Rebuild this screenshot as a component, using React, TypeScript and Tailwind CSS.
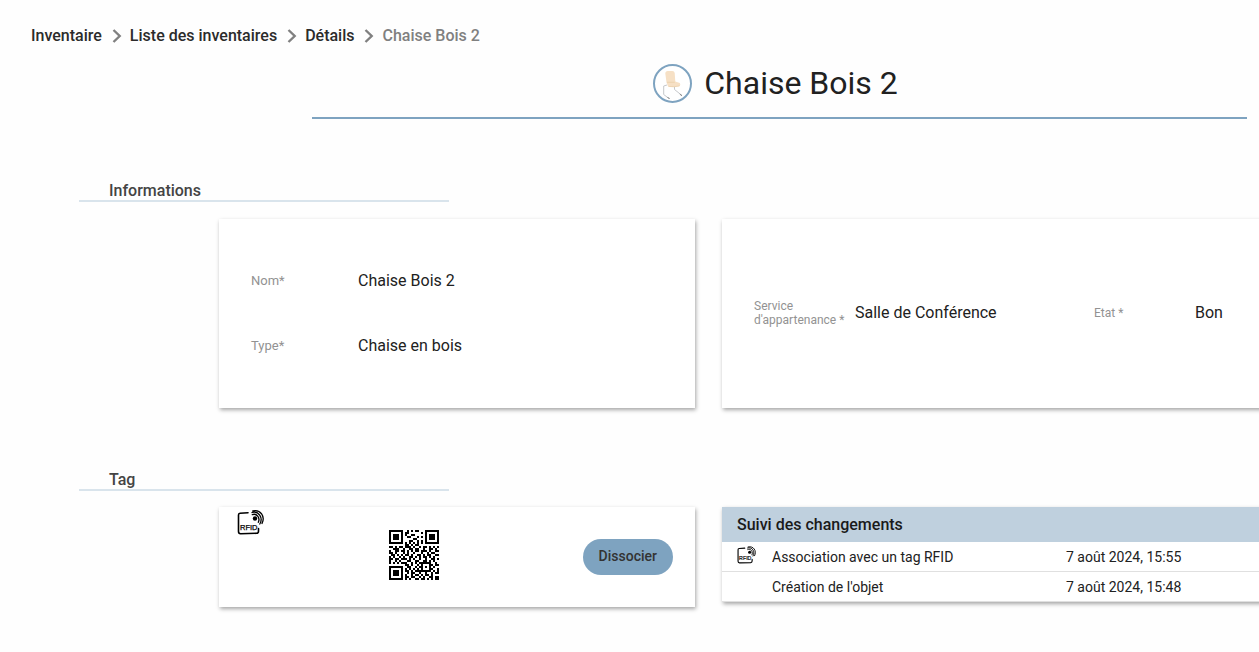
import { Fragment } from "react";

interface Change {
  label: string;
  date: string;
  rfid: boolean;
}

const PARENTS = ["Inventaire", "Liste des inventaires", "Détails"];

const CHANGES: Change[] = [
  { label: "Association avec un tag RFID", date: "7 août 2024, 15:55", rfid: true },
  { label: "Création de l'objet", date: "7 août 2024, 15:48", rfid: false },
];

// One string per row, "#" is a dark module
const QR_ROWS = [
  "#######..#.#.##...#######",
  "#.....#.##......#.#.....#",
  "#.###.#.#..##.....#.###.#",
  "#.###.#..##...#.#.#.###.#",
  "#.###.#.....##....#.###.#",
  "#.....#...##..#.#.#.....#",
  "#######.#.#.#.#.#.#######",
  "........##.#.##..........",
  "##.#.##.###.#..#.##.#.#.#",
  "..###..#..##.##..#..##.#.",
  "#..##.##.#.#.##.###.#..##",
  "##.#...#.#..#...#..#.##..",
  ".##.#.#.##.#..##.#.##..##",
  "#.#..#.#..##.#.#.##.#.#..",
  "##.##.###.#.#..#..#..##.#",
  "#..#.#...##..##..##.#.#..",
  "#.#.#.###..#.#.######..#.",
  "........##.#..#.#...##.##",
  "#######..##..#.##.#.#.#..",
  "#.....#.#.#.#.#.#...##..#",
  "#.###.#.##.#.########.#.#",
  "#.###.#..#.##..#..#..#.##",
  "#.###.#.#..#.##.#.##.#...",
  "#.....#.##.##..#.#..##.##",
  "#######.#.#..##.##.#.#.##",
];

function Chevron() {
  return (
    <svg viewBox="0 0 10 14" className="h-[14px] w-[10px]" fill="none" stroke="#808080" strokeWidth="2.4" aria-hidden="true">
      <path d="M1.500 1 7.700 7 1.500 13" />
    </svg>
  );
}

function RfidIcon({ className }: { className: string }) {
  return (
    <svg viewBox="0 0 27 25" className={className} fill="none" stroke="#000" strokeLinecap="round" aria-hidden="true">
      <path strokeWidth="1.6" d="M11 2.800 3 3.200Q1.500 3.300 1.500 5V21.500Q1.500 23.700 3.500 23.700L19.500 23.300Q21.500 23.200 21.500 21.200V18.500" />
      <circle cx="18" cy="8.500" r="2.200" fill="#000" stroke="none" />
      <path strokeWidth="1.300" d="M15.300 4.700C19.500 3 23.500 7.500 21.300 12.300M15 2.500C21.500.300 26.500 8 22.800 14M15.800 1C23.500-.800 28.500 6.500 25 13.500" />
      <text x="3" y="20" fontSize="7.500" fontFamily="Liberation Sans, sans-serif" fill="#000" stroke="#000" strokeWidth=".25">
        RFID
      </text>
    </svg>
  );
}

function ChairPicture() {
  return (
    <svg viewBox="0 0 39 39" className="size-[39px]" fill="none" role="img" aria-label="Chaise Bois 2">
      <circle cx="19.500" cy="19.500" r="18.500" fill="#fff" stroke="#7ea3c0" strokeWidth="2" />
      <path d="M14 21 10.700 22V30.500L16 34.500M21.500 22.500V25.500L29 31.500" stroke="#c6c8cb" strokeWidth="1" />
      <path d="m14.500 33.500 2.200 1M26.800 30.200l2.200 1.500" stroke="#858585" strokeWidth="1" />
      <path d="M12.300 9.500Q12.300 7 14.800 7H19.300Q21.500 7 21.700 9L22.300 17.500 26.800 19Q27.800 20.500 26.800 22Q20.500 23.600 15 22.600L13.500 18.500Z" fill="#f6e0c5" />
      <path d="M14 18.300H21.800M15.500 22.400Q21 23.400 26.500 21.900" stroke="#ebcfaa" strokeWidth=".8" />
    </svg>
  );
}

function QrCode() {
  return (
    <svg viewBox="0 0 25 25" className="size-[50px]" shapeRendering="crispEdges" role="img" aria-label="QR code">
      {QR_ROWS.map((row, y) =>
        row.split("").map((cell, x) =>
          cell === "#" ? <rect key={`${x}-${y}`} x={x} y={y} width="1" height="1" /> : null
        )
      )}
    </svg>
  );
}

function SectionTitle({ children }: { children: string }) {
  return (
    <h2 className="ml-[79px] w-[370px] border-b-2 border-[#d9e4ec] pl-[30px] text-base leading-[18px] font-medium text-[#444]">
      {children}
    </h2>
  );
}

export default function App() {
  return (
    <div className="min-h-screen overflow-x-hidden bg-[#fefefe] pb-11 font-[Roboto,sans-serif] text-[#212121]">
      <nav aria-label="Fil d'Ariane" className="mt-6 flex h-6 items-center pl-[31px] text-base font-medium">
        {PARENTS.map((label) => (
          <Fragment key={label}>
            <a href="#" className="mr-[10px] text-[#2b2b2b]">{label}</a>
            <span className="mr-2"><Chevron /></span>
          </Fragment>
        ))}
        <span aria-current="page" className="text-[#808080]">Chaise Bois 2</span>
      </nav>

      <header className="mt-3 mr-3 ml-[312px] flex h-[59px] items-start justify-center gap-3 border-b-2 border-[#7ea3c0] pt-1 pr-2">
        <ChairPicture />
        <h1 className="text-[32px] leading-[38px]">Chaise Bois 2</h1>
      </header>

      <section className="mt-[63px]">
        <SectionTitle>Informations</SectionTitle>
        <div className="mt-[17px] -mr-8 ml-[219px] grid h-[189px] grid-cols-[476px_1fr] gap-[27px]">
          <dl className="grid content-center gap-[41px] bg-white pl-8 shadow-[1px_2px_4px_rgba(0,0,0,0.35)]">
            <div className="flex items-center">
              <dt className="w-[107px] text-[13px] leading-6 text-[#929292]">Nom*</dt>
              <dd className="text-base">Chaise Bois 2</dd>
            </div>
            <div className="flex items-center">
              <dt className="w-[107px] text-[13px] leading-6 text-[#929292]">Type*</dt>
              <dd className="text-base">Chaise en bois</dd>
            </div>
          </dl>
          <dl className="flex items-center bg-white pb-0.5 pl-8 shadow-[1px_2px_4px_rgba(0,0,0,0.35)]">
            <div className="flex w-[340px] items-center">
              <dt className="w-[101px] text-xs leading-[14px] text-[#929292]">Service d'appartenance *</dt>
              <dd className="text-base">Salle de Conférence</dd>
            </div>
            <div className="flex items-center">
              <dt className="w-[101px] text-xs leading-[14px] text-[#929292]">Etat *</dt>
              <dd className="text-base">Bon</dd>
            </div>
          </dl>
        </div>
      </section>

      <section className="mt-[63px]">
        <SectionTitle>Tag</SectionTitle>
        <div className="mt-4 -mr-8 ml-[219px] grid grid-cols-[476px_1fr] items-start gap-[27px]">
          <div className="flex h-[100px] items-center bg-white pr-[22px] pl-[18px] shadow-[1px_2px_4px_rgba(0,0,0,0.35)]">
            <span className="mr-[125px] self-start pt-[3px]">
              <RfidIcon className="h-[25px] w-[27px]" />
            </span>
            <span className="pb-1"><QrCode /></span>
            <button type="button" className="ml-auto h-9 rounded-full bg-[#7ea3c0] px-4 pb-0.5 text-sm font-medium text-[#333]">
              Dissocier
            </button>
          </div>

          <table className="w-full table-fixed border-separate border-spacing-0 bg-white text-left text-sm shadow-[1px_2px_4px_rgba(0,0,0,0.35)]">
            <colgroup>
              <col className="w-[50px]" />
              <col className="w-[294px]" />
              <col />
            </colgroup>
            <thead>
              <tr className="h-[35px] bg-[#bfd0de]">
                <th colSpan={3} className="pl-[15px] text-base font-medium text-[#1a1a1a]">Suivi des changements</th>
              </tr>
            </thead>
            <tbody>
              {CHANGES.map((change) => (
                <tr key={change.label} className="h-[30px]">
                  <td className="border-b border-[#e0e0e0] pb-1 pl-[15px]">
                    {change.rfid && <RfidIcon className="h-[18px] w-[19px]" />}
                  </td>
                  <td className="border-b border-[#e0e0e0]">{change.label}</td>
                  <td className="border-b border-[#e0e0e0]">{change.date}</td>
                </tr>
              ))}
            </tbody>
          </table>
        </div>
      </section>
    </div>
  );
}
